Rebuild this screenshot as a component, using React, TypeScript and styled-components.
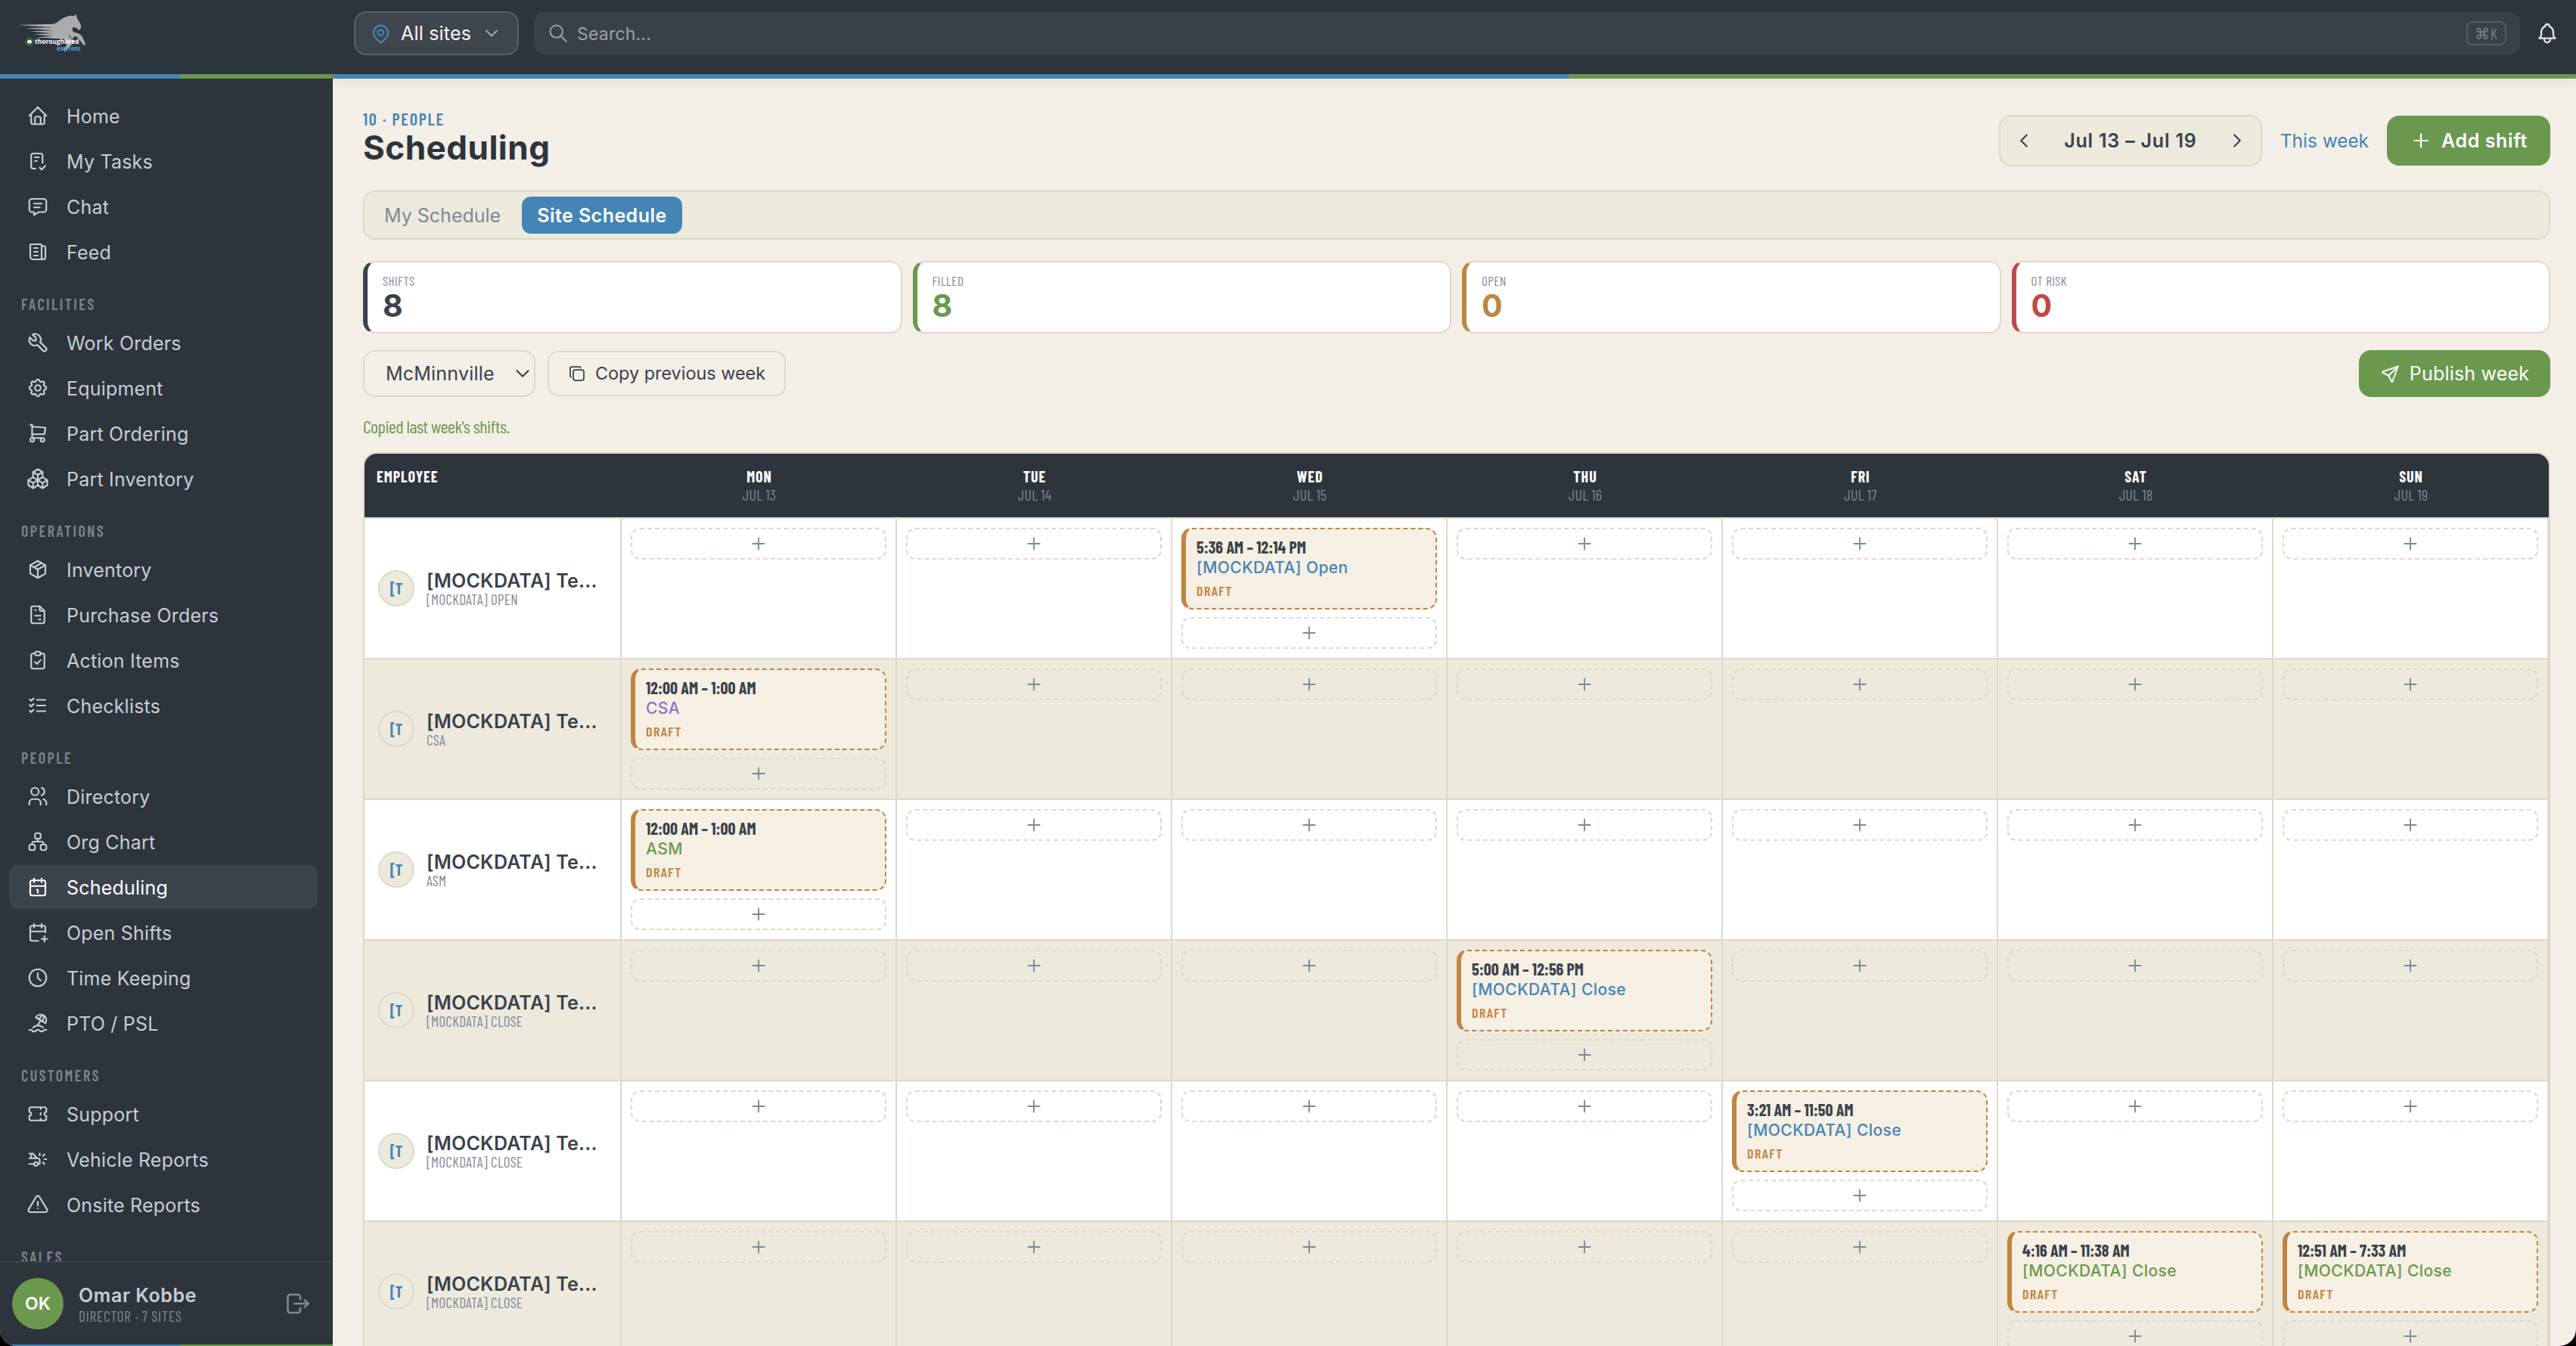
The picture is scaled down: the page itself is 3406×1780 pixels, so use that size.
import React from "react";
import styled, { createGlobalStyle, css } from "styled-components";
import type { IconType } from "react-icons";
import {
  TbAlertTriangle,
  TbBeach,
  TbBell,
  TbCalendar,
  TbCalendarPlus,
  TbCarCrash,
  TbChecklist,
  TbChevronDown,
  TbChevronLeft,
  TbChevronRight,
  TbClipboardCheck,
  TbClock,
  TbCopy,
  TbFileInvoice,
  TbHome,
  TbListCheck,
  TbLogout,
  TbMapPin,
  TbMessage,
  TbNews,
  TbPackage,
  TbPackages,
  TbPlus,
  TbSearch,
  TbSend,
  TbSettings,
  TbShoppingCart,
  TbSitemap,
  TbTicket,
  TbTool,
  TbUsers,
} from "react-icons/tb";

const colors = {
  ink: "#2d343c",
  slate: "#3a424b",
  muted: "#7f8a95",
  navText: "#c8ccd5",
  blue: "#4385b5",
  green: "#6b984f",
  amber: "#c08540",
  red: "#c04848",
  purple: "#8b6fd0",
  page: "#f3eee6",
  sand: "#ede9dd",
  line: "#dfd8ca",
};

const GlobalStyle = createGlobalStyle`
  * { box-sizing: border-box; }
  html { background: #000; }
  body { margin: 0; overflow: hidden; }
  svg { flex-shrink: 0; stroke-width: 1.75; }
  button {
    margin: 0;
    font: inherit;
    letter-spacing: inherit;
    color: inherit;
    cursor: pointer;
  }
`;

const condensed = css`
  font-family: "Barlow Condensed", "Roboto Condensed", sans-serif;
  letter-spacing: 0;
`;

/* ---------- shell ---------- */

const Shell = styled.div`
  display: flex;
  width: 100vw;
  height: 1780px;
  overflow: hidden;
  border-radius: 0 0 22px 22px;
  background: ${colors.page};
  font-family: Inter, sans-serif;
  font-size: 25px;
  letter-spacing: 0.2px;
  line-height: 30px;
  color: ${colors.slate};
`;

const Sidebar = styled.aside`
  display: flex;
  flex-direction: column;
  width: 440px;
  flex-shrink: 0;
  background: ${colors.ink};
`;

const Stripe = styled.div<{ $size: number; $stop: string }>`
  height: ${(p) => p.$size}px;
  flex-shrink: 0;
  background: linear-gradient(
    to right,
    ${colors.blue} ${(p) => p.$stop},
    ${colors.green} ${(p) => p.$stop}
  );
`;

const Brand = styled.div`
  height: 98px;
  padding: 15px 20px;
  flex-shrink: 0;
`;

const Nav = styled.nav`
  flex: 1;
  min-height: 0;
  overflow: hidden;
  padding: 20px 20px 0 12px;
`;

const NavHeading = styled.div`
  ${condensed}
  height: 60px;
  padding: 26px 16px 0;
  font-size: 20px;
  font-weight: 600;
  line-height: 24px;
  letter-spacing: 2.5px;
  color: #7b838d;
`;

const NavItem = styled.div<{ $active?: boolean }>`
  display: flex;
  align-items: center;
  gap: 23px;
  height: 58px;
  margin-bottom: 2px;
  padding-left: 23px;
  border-radius: 12px;
  color: ${(p) => (p.$active ? "#fff" : colors.navText)};
  background: ${(p) => (p.$active ? "#3b434c" : "transparent")};
`;

const NavLabel = styled.span`
  padding-top: 2px;
`;

const UserBar = styled.div`
  display: flex;
  align-items: center;
  height: 110px;
  flex-shrink: 0;
  padding: 0 28px 0 16px;
  border-top: 2px solid ${colors.slate};
`;

const UserAvatar = styled.div`
  display: flex;
  align-items: center;
  justify-content: center;
  width: 68px;
  height: 68px;
  border-radius: 50%;
  background: ${colors.green};
  color: #fff;
  font-size: 23px;
  font-weight: 600;
`;

const UserInfo = styled.div`
  flex: 1;
  margin-left: 20px;
`;

const UserName = styled.div`
  padding-top: 1px;
  font-weight: 600;
  line-height: 32px;
  letter-spacing: 0.6px;
  color: ${colors.navText};
`;

const UserRole = styled.div`
  ${condensed}
  font-size: 19px;
  line-height: 24px;
  letter-spacing: 0.9px;
  color: ${colors.muted};
`;

const LogoutIcon = styled(TbLogout)`
  color: ${colors.muted};
`;

/* ---------- top bar ---------- */

const Body = styled.div`
  display: flex;
  flex-direction: column;
  flex: 1;
  min-width: 0;
`;

const TopBar = styled.header`
  z-index: 1;
  box-shadow: 0 4px 16px rgba(45, 52, 60, 0.08);
`;

const TopBarRow = styled.div`
  display: flex;
  align-items: center;
  height: 98px;
  padding: 0 22px 10px 28px;
  background: ${colors.ink};
`;

const SiteSelect = styled.button`
  display: flex;
  align-items: center;
  width: 218px;
  height: 58px;
  padding: 0 20px 0 19px;
  border: 2px solid #5a5f69;
  border-radius: 16px;
  background: #3f454c;
  color: #f3f4f5;

  svg:first-child {
    color: ${colors.blue};
    margin-right: 12px;
  }

  svg:last-child {
    color: #a3a6ab;
    margin-left: auto;
  }
`;

const SearchBox = styled.div`
  display: flex;
  align-items: center;
  flex: 1;
  height: 56px;
  margin: 0 20px;
  padding: 0 18px;
  border-radius: 14px;
  background: #3a4048;
  color: #9ea1a6;
`;

const SearchText = styled.span`
  flex: 1;
  margin-left: 11px;
  padding-top: 1px;
  font-size: 23px;
`;

const Kbd = styled.kbd`
  ${condensed}
  display: flex;
  align-items: center;
  justify-content: center;
  width: 53px;
  height: 32px;
  border: 2px solid #555a62;
  border-radius: 8px;
  font-size: 20px;
  letter-spacing: 1px;
  color: #7d8187;
`;

const BellIcon = styled(TbBell)`
  color: #e2e2e0;
`;

/* ---------- page header ---------- */

const Main = styled.main`
  flex: 1;
  min-height: 0;
  overflow: hidden;
  padding: 40px 34px 0 40px;
`;

const PageHeader = styled.div`
  display: flex;
  align-items: flex-end;
  justify-content: space-between;
  height: 76px;
`;

const Eyebrow = styled.div`
  ${condensed}
  font-size: 22px;
  font-weight: 600;
  line-height: 26px;
  letter-spacing: 1.8px;
  color: ${colors.blue};
`;

const Title = styled.h1`
  margin: 0;
  font-size: 44px;
  font-weight: 700;
  line-height: 50px;
  letter-spacing: 0.5px;
  color: ${colors.ink};
`;

const HeaderActions = styled.div`
  display: flex;
  align-items: center;
  gap: 24px;
`;

const WeekPicker = styled.div`
  display: flex;
  align-items: center;
  justify-content: space-between;
  width: 348px;
  height: 68px;
  padding: 0 16px;
  border: 2px solid ${colors.line};
  border-radius: 16px;
  background: ${colors.sand};
  font-weight: 600;
  letter-spacing: 0.8px;
`;

const WeekLink = styled.a`
  font-size: 24.4px;
  letter-spacing: 0;
  color: ${colors.blue};
`;

const PrimaryButton = styled.button<{ $width: number; $height: number; $bold?: boolean }>`
  display: flex;
  align-items: center;
  justify-content: center;
  gap: 12px;
  width: ${(p) => p.$width}px;
  height: ${(p) => p.$height}px;
  padding: 0;
  border: 0;
  border-radius: 16px;
  background: ${colors.green};
  color: #fff;
  font-weight: ${(p) => (p.$bold ? 600 : 400)};
  letter-spacing: ${(p) => (p.$bold ? 0.6 : 0.2)}px;
`;

/* ---------- tabs, stats, toolbar ---------- */

const Tabs = styled.div`
  display: flex;
  gap: 8px;
  height: 65px;
  margin-top: 32px;
  padding: 6px;
  border: 2px solid ${colors.line};
  border-radius: 16px;
  background: ${colors.sand};
`;

const Tab = styled.button<{ $active?: boolean }>`
  padding: 1px 20px 0;
  border: 0;
  border-radius: 12px;
  line-height: 48px;
  background: ${(p) => (p.$active ? colors.blue : "transparent")};
  color: ${(p) => (p.$active ? "#fff" : colors.muted)};
  font-weight: ${(p) => (p.$active ? 600 : 400)};
  letter-spacing: ${(p) => (p.$active ? 0.45 : 0)}px;
`;

const Stats = styled.div`
  display: grid;
  grid-template-columns: repeat(4, 1fr);
  gap: 14px;
  margin-top: 28px;
`;

const StatCard = styled.div<{ $accent: string }>`
  height: 96px;
  padding: 13px 20px 0;
  border: 2px solid ${colors.line};
  border-left: 6px solid ${(p) => p.$accent};
  border-radius: 16px;
  background: #fff;
  color: ${(p) => p.$accent};
`;

const StatLabel = styled.div`
  ${condensed}
  font-size: 17px;
  line-height: 22px;
  letter-spacing: 0.45px;
  color: ${colors.muted};
`;

const StatValue = styled.div`
  font-size: 41px;
  font-weight: 700;
  line-height: 44px;
`;

const Toolbar = styled.div`
  display: flex;
  align-items: center;
  gap: 16px;
  margin-top: 22px;
`;

const Picker = styled.div`
  display: flex;
  align-items: center;
  justify-content: space-between;
  width: 228px;
  height: 62px;
  padding-left: 28px;
  border: 2px solid ${colors.line};
  border-radius: 16px;
`;

const OutlineButton = styled.button`
  display: flex;
  align-items: center;
  justify-content: center;
  gap: 12px;
  width: 315px;
  height: 60px;
  padding: 0;
  border: 2px solid ${colors.line};
  border-radius: 14px;
  background: transparent;
  font-size: 23.4px;
  letter-spacing: 0;
`;

const Spacer = styled.div`
  flex: 1;
`;

const Notice = styled.div`
  ${condensed}
  margin-top: 24px;
  font-size: 24px;
  line-height: 30px;
  letter-spacing: -0.4px;
  color: ${colors.green};
`;

/* ---------- schedule table ---------- */

const Schedule = styled.div`
  margin-top: 19px;
  border: 2px solid ${colors.line};
  border-radius: 18px;
  overflow: hidden;
`;

const rowGrid = css`
  display: grid;
  grid-template-columns: 340px repeat(7, 364px);
`;

const HeadRow = styled.div`
  ${rowGrid}
  ${condensed}
  height: 86px;
  padding-top: 18px;
  border-bottom: 2px solid ${colors.line};
  background: ${colors.ink};
  font-size: 20px;
  line-height: 24px;
  text-align: center;
`;

const HeadLabel = styled.div<{ $left?: boolean }>`
  font-weight: 700;
  letter-spacing: 1px;
  color: #fff;
  ${(p) => p.$left && "padding-left: 16px; text-align: left;"}
`;

const HeadDate = styled.div`
  letter-spacing: 0.2px;
  color: #7d858f;
`;

const Row = styled.div<{ $alt: boolean }>`
  ${rowGrid}
  height: 186px;
  background: ${(p) => (p.$alt ? colors.sand : "#fff")};
`;

const Cell = styled.div`
  display: flex;
  flex-direction: column;
  gap: 10px;
  padding: 12px;
  border-right: 2px solid ${colors.line};
  border-bottom: 2px solid ${colors.line};
`;

const EmployeeCell = styled(Cell)`
  flex-direction: row;
  align-items: center;
  gap: 16px;
  padding: 0 16px 0 18px;
`;

const Initials = styled.div`
  ${condensed}
  display: flex;
  align-items: center;
  justify-content: center;
  width: 48px;
  height: 48px;
  flex-shrink: 0;
  border: 2px solid ${colors.line};
  border-radius: 50%;
  background: ${colors.sand};
  color: ${colors.blue};
  font-size: 20px;
  font-weight: 700;
`;

const EmployeeName = styled.div`
  padding-top: 1px;
  font-weight: 600;
  line-height: 28px;
  white-space: nowrap;
`;

const EmployeeRole = styled.div`
  ${condensed}
  font-size: 19px;
  line-height: 22px;
  letter-spacing: 0.35px;
  color: ${colors.muted};
`;

const ShiftCard = styled.div`
  height: 108px;
  padding: 10px 14px 0;
  border: 2px dashed ${colors.amber};
  border-left: 6px solid ${colors.amber};
  border-radius: 14px;
  background: #f6efe3;
`;

const ShiftTime = styled.div`
  ${condensed}
  font-size: 22px;
  font-weight: 700;
  line-height: 27px;
`;

const ShiftRole = styled.div<{ $color: string }>`
  font-size: 21px;
  font-weight: 500;
  line-height: 27px;
  letter-spacing: 0.4px;
  color: ${(p) => p.$color};
`;

const ShiftStatus = styled.div`
  ${condensed}
  margin-top: 6px;
  font-size: 18px;
  font-weight: 600;
  line-height: 22px;
  letter-spacing: 1.4px;
  color: ${colors.amber};
`;

const AddSlot = styled.button`
  display: flex;
  align-items: center;
  justify-content: center;
  height: 42px;
  padding: 0;
  border: 2px dashed ${colors.line};
  border-radius: 12px;
  background: transparent;
  color: ${colors.muted};
`;

/* ---------- data ---------- */

type NavEntry = { label: string; icon: IconType };

const navSections: { heading?: string; items: NavEntry[] }[] = [
  {
    items: [
      { label: "Home", icon: TbHome },
      { label: "My Tasks", icon: TbChecklist },
      { label: "Chat", icon: TbMessage },
      { label: "Feed", icon: TbNews },
    ],
  },
  {
    heading: "FACILITIES",
    items: [
      { label: "Work Orders", icon: TbTool },
      { label: "Equipment", icon: TbSettings },
      { label: "Part Ordering", icon: TbShoppingCart },
      { label: "Part Inventory", icon: TbPackages },
    ],
  },
  {
    heading: "OPERATIONS",
    items: [
      { label: "Inventory", icon: TbPackage },
      { label: "Purchase Orders", icon: TbFileInvoice },
      { label: "Action Items", icon: TbClipboardCheck },
      { label: "Checklists", icon: TbListCheck },
    ],
  },
  {
    heading: "PEOPLE",
    items: [
      { label: "Directory", icon: TbUsers },
      { label: "Org Chart", icon: TbSitemap },
      { label: "Scheduling", icon: TbCalendar },
      { label: "Open Shifts", icon: TbCalendarPlus },
      { label: "Time Keeping", icon: TbClock },
      { label: "PTO / PSL", icon: TbBeach },
    ],
  },
  {
    heading: "CUSTOMERS",
    items: [
      { label: "Support", icon: TbTicket },
      { label: "Vehicle Reports", icon: TbCarCrash },
      { label: "Onsite Reports", icon: TbAlertTriangle },
    ],
  },
  { heading: "SALES", items: [] },
];

const stats = [
  { label: "SHIFTS", value: 8, accent: colors.slate },
  { label: "FILLED", value: 8, accent: colors.green },
  { label: "OPEN", value: 0, accent: colors.amber },
  { label: "OT RISK", value: 0, accent: colors.red },
];

const days = ["MON", "TUE", "WED", "THU", "FRI", "SAT", "SUN"];

type Shift = { day: number; time: string; role: string; color: string };

const employees: { role: string; shifts: Shift[] }[] = [
  {
    role: "[MOCKDATA] OPEN",
    shifts: [{ day: 2, time: "5:36 AM – 12:14 PM", role: "[MOCKDATA] Open", color: colors.blue }],
  },
  {
    role: "CSA",
    shifts: [{ day: 0, time: "12:00 AM – 1:00 AM", role: "CSA", color: colors.purple }],
  },
  {
    role: "ASM",
    shifts: [{ day: 0, time: "12:00 AM – 1:00 AM", role: "ASM", color: colors.green }],
  },
  {
    role: "[MOCKDATA] CLOSE",
    shifts: [{ day: 3, time: "5:00 AM – 12:56 PM", role: "[MOCKDATA] Close", color: colors.blue }],
  },
  {
    role: "[MOCKDATA] CLOSE",
    shifts: [{ day: 4, time: "3:21 AM – 11:50 AM", role: "[MOCKDATA] Close", color: colors.blue }],
  },
  {
    role: "[MOCKDATA] CLOSE",
    shifts: [
      { day: 5, time: "4:16 AM – 11:38 AM", role: "[MOCKDATA] Close", color: colors.green },
      { day: 6, time: "12:51 AM – 7:33 AM", role: "[MOCKDATA] Close", color: colors.green },
    ],
  },
];

/* ---------- components ---------- */

const Logo: React.FC = () => (
  <svg width="110" height="75" viewBox="0 0 330 225" aria-label="thoroughbred express">
    {/* horse with speed lines */}
    <g fill="#a9abae">
      <path d="M10 54 L150 50 C170 48 176 30 204 21 C216 16 226 16 233 19 L241 11 L246 26 C250 38 260 46 262 60 C262 68 258 73 252 74 C246 66 238 64 231 62 C225 68 226 76 232 84 C240 92 238 104 222 112 L160 108 L85 103 L150 98 L72 91 L150 88 L58 79 L150 76 L40 67 L150 64 Z" />
      <path d="M216 80 C240 82 262 88 268 104 L280 131 C276 136 270 134 268 130 L254 110 C244 98 228 96 216 96 Z" />
      <path d="M196 108 L232 110 C236 124 224 132 214 142 C208 150 200 154 190 152 C200 142 206 134 206 126 Z" />
    </g>
    <path d="M214 92 C216 104 222 108 234 112" fill="none" stroke={colors.ink} strokeWidth="3" />
    <circle cx="57" cy="121" r="16" fill="none" stroke="#4d8038" strokeWidth="2.5" />
    <circle cx="57" cy="121" r="11" fill="#5f9c3f" />
    <path d="M49 125 V119 L53 114 H61 L65 119 V125 Z" fill="#fff" />
    <text x="78" y="130" fill="#fff" fontFamily="Open Sans, sans-serif" fontWeight="700" fontSize="24" textLength="176" lengthAdjust="spacingAndGlyphs">
      thoroughbred
    </text>
    <text x="165" y="157" fill="#4ea3dc" fontFamily="Open Sans, sans-serif" fontWeight="700" fontSize="24" textLength="94" lengthAdjust="spacingAndGlyphs">
      express
    </text>
  </svg>
);

const SideNav: React.FC = () => (
  <Sidebar>
    <Brand>
      <Logo />
    </Brand>
    <Stripe $size={6} $stop="238px" />
    <Nav>
      {navSections.map((section, i) => (
        <React.Fragment key={i}>
          {section.heading && <NavHeading>{section.heading}</NavHeading>}
          {section.items.map(({ label, icon: Icon }) => (
            <NavItem key={label} $active={label === "Scheduling"}>
              <Icon size={30} />
              <NavLabel>{label}</NavLabel>
            </NavItem>
          ))}
        </React.Fragment>
      ))}
    </Nav>
    <UserBar>
      <UserAvatar>OK</UserAvatar>
      <UserInfo>
        <UserName>Omar Kobbe</UserName>
        <UserRole>DIRECTOR · 7 SITES</UserRole>
      </UserInfo>
      <LogoutIcon size={36} />
    </UserBar>
    <Stripe $size={2} $stop="238px" />
  </Sidebar>
);

const ScheduleTable: React.FC = () => (
  <Schedule>
    <HeadRow>
      <HeadLabel $left>EMPLOYEE</HeadLabel>
      {days.map((day, i) => (
        <div key={day}>
          <HeadLabel>{day}</HeadLabel>
          <HeadDate>JUL {13 + i}</HeadDate>
        </div>
      ))}
    </HeadRow>
    {employees.map((employee, i) => (
      <Row key={i} $alt={i % 2 === 1}>
        <EmployeeCell>
          <Initials>[T</Initials>
          <div>
            <EmployeeName>[MOCKDATA] Te...</EmployeeName>
            <EmployeeRole>{employee.role}</EmployeeRole>
          </div>
        </EmployeeCell>
        {days.map((day, d) => (
          <Cell key={day}>
            {employee.shifts
              .filter((shift) => shift.day === d)
              .map((shift) => (
                <ShiftCard key={shift.time}>
                  <ShiftTime>{shift.time}</ShiftTime>
                  <ShiftRole $color={shift.color}>{shift.role}</ShiftRole>
                  <ShiftStatus>DRAFT</ShiftStatus>
                </ShiftCard>
              ))}
            <AddSlot>
              <TbPlus size={26} />
            </AddSlot>
          </Cell>
        ))}
      </Row>
    ))}
  </Schedule>
);

const App: React.FC = () => (
  <>
    <GlobalStyle />
    <Shell>
      <SideNav />
      <Body>
        <TopBar>
          <TopBarRow>
            <SiteSelect>
              <TbMapPin size={29} />
              All sites
              <TbChevronDown size={28} />
            </SiteSelect>
            <SearchBox>
              <TbSearch size={28} />
              <SearchText>Search...</SearchText>
              <Kbd>⌘K</Kbd>
            </SearchBox>
            <BellIcon size={32} />
          </TopBarRow>
          <Stripe $size={6} $stop="55.1%" />
        </TopBar>
        <Main>
          <PageHeader>
            <div>
              <Eyebrow>10 · PEOPLE</Eyebrow>
              <Title>Scheduling</Title>
            </div>
            <HeaderActions>
              <WeekPicker>
                <TbChevronLeft size={30} />
                Jul 13 – Jul 19
                <TbChevronRight size={30} />
              </WeekPicker>
              <WeekLink>This week</WeekLink>
              <PrimaryButton $width={216} $height={66} $bold>
                <TbPlus size={30} />
                Add shift
              </PrimaryButton>
            </HeaderActions>
          </PageHeader>
          <Tabs>
            <Tab>My Schedule</Tab>
            <Tab $active>Site Schedule</Tab>
          </Tabs>
          <Stats>
            {stats.map((stat) => (
              <StatCard key={stat.label} $accent={stat.accent}>
                <StatLabel>{stat.label}</StatLabel>
                <StatValue>{stat.value}</StatValue>
              </StatCard>
            ))}
          </Stats>
          <Toolbar>
            <Picker>
              McMinnville
              <TbChevronDown size={30} />
            </Picker>
            <OutlineButton>
              <TbCopy size={24} />
              Copy previous week
            </OutlineButton>
            <Spacer />
            <PrimaryButton $width={253} $height={62}>
              <TbSend size={27} />
              Publish week
            </PrimaryButton>
          </Toolbar>
          <Notice>Copied last week's shifts.</Notice>
          <ScheduleTable />
        </Main>
      </Body>
    </Shell>
  </>
);

export default App;
